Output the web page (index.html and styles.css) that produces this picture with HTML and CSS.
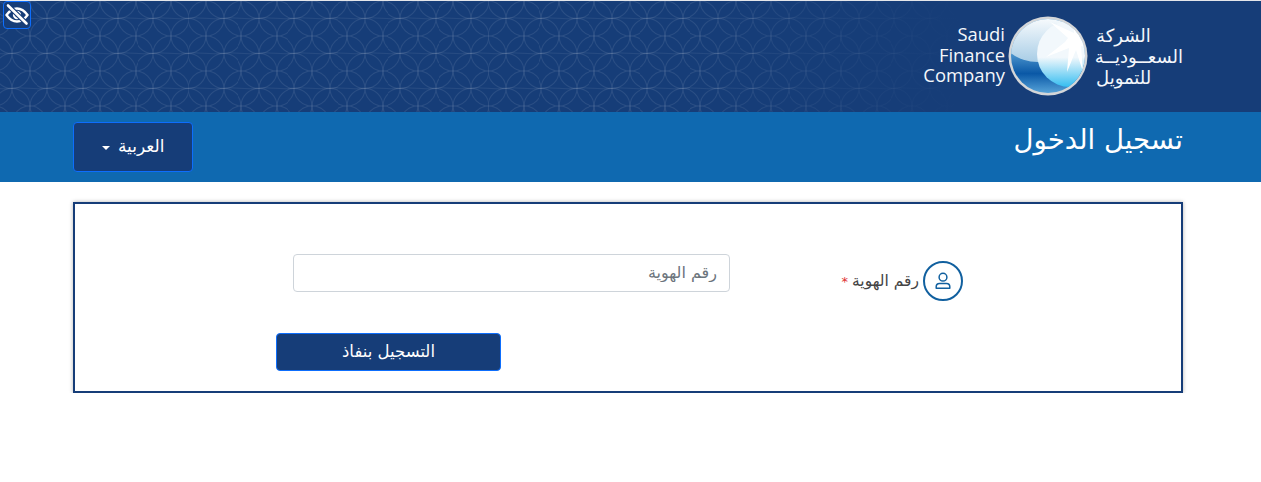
FILE: index.html
```html
<!DOCTYPE html>
<html lang="ar" dir="rtl">
<head>
  <meta charset="UTF-8">
  <title>تسجيل الدخول</title>
  <meta name="viewport" content="width=device-width, initial-scale=1.0">
  <link rel="stylesheet" href="styles.css">
</head>
<body>

  <button class="eye-btn" type="button" aria-label="hide">
    <svg viewBox="0 0 24 24" width="24" height="24" fill="none" stroke="#fff">
      <path d="M1.5 12C5 7 8.500 5.500 12 5.500s7 1.500 10.500 6.500C19 17 15.500 18.500 12 18.500S5 17 1.500 12z" stroke-width="2.300"/>
      <circle cx="12" cy="12" r="3" stroke-width="2.300"/>
      <path d="M3 2.500l18.500 18" stroke="#163d78" stroke-width="5"/>
      <path d="M3 2.500l18.500 18" stroke-width="2.600" stroke-linecap="round"/>
    </svg>
  </button>

  <div class="top-band">
    <div class="container logo-wrap">
      <div class="logo-ar">الشركة<br>السعــوديــة<br>للتمويل</div>
      <svg class="globe" viewBox="0 0 80 80" width="80" height="80">
        <defs>
          <linearGradient id="sea" x1="0" y1="0" x2="0" y2="1">
            <stop offset="0.4" stop-color="#5fa6d8"/>
            <stop offset="0.72" stop-color="#0a58a6"/>
            <stop offset="1" stop-color="#62aee0"/>
          </linearGradient>
          <linearGradient id="sky" x1="0" y1="0" x2="0" y2="1">
            <stop offset="0.2" stop-color="#ffffff"/>
            <stop offset="1" stop-color="#a8cde6"/>
          </linearGradient>
          <linearGradient id="moon" x1="0" y1="0" x2="0" y2="1">
            <stop offset="0.55" stop-color="#f2f8fc"/>
            <stop offset="1" stop-color="#35bdf0"/>
          </linearGradient>
          <clipPath id="disc"><circle cx="40" cy="40" r="37"/></clipPath>
        </defs>
        <circle cx="40" cy="40" r="39.500" fill="#d4d6d8"/>
        <g clip-path="url(#disc)">
          <rect width="80" height="80" fill="url(#sea)"/>
          <ellipse cx="30" cy="16" rx="38" ry="30" fill="url(#sky)"/>
          <circle cx="62" cy="38" r="33" fill="url(#moon)"/>
          <path d="M60 22L42 6l24 11-1-16 6 16 12-4-9 11 8 8-9-2 2 26-7-22-9 22 2-24-23 9 19-15z" fill="#fff"/>
        </g>
      </svg>
      <div class="logo-en">Saudi<br>Finance<br>Company</div>
    </div>
  </div>

  <div class="title-band">
    <div class="container title-row">
      <h1>تسجيل الدخول</h1>
      <button class="lang-btn" type="button">العربية <span class="caret"></span></button>
    </div>
  </div>

  <div class="container">
    <form class="login-card">
      <label class="id-label">
        <span class="user-icon">
          <svg viewBox="0 0 20 20" width="20" height="20" fill="none" stroke="#11609f" stroke-width="1.500">
            <circle cx="10" cy="6.200" r="3.900"/>
            <path d="M3.200 17.200v-1.400c0-2 1.400-3.300 3.300-3.300h7c1.900 0 3.300 1.300 3.300 3.300v1.400z" stroke-linejoin="round"/>
          </svg>
        </span>
        <span>رقم الهوية</span>
        <span class="req">*</span>
      </label>
      <input class="id-input" type="text" placeholder="رقم الهوية">
      <button class="submit-btn" type="button">التسجيل بنفاذ</button>
    </form>
  </div>

</body>
</html>
```

FILE: styles.css
```css
body {
  margin: 0;
  font-family: "DejaVu Sans", "Open Sans", sans-serif;
  background-color: #fff;
  color: #444;
}

.container {
  width: 1110px;
  margin-right: 78px;
}

.eye-btn {
  position: absolute;
  top: 1px;
  left: 3px;
  width: 28px;
  height: 28px;
  padding: 0;
  display: flex;
  align-items: center;
  justify-content: center;
  background-color: #163d78;
  border: 1px solid #0d6efd;
  border-radius: 4px;
}

.top-band {
  height: 111px;
  border-top: 1px solid #e4e6ea;
  background-color: #163d78;
  background-image:
    linear-gradient(to right, rgba(22,61,120,0) 0, rgba(22,61,120,0) 55%, #163d78 76%),
    url("data:image/svg+xml,%3Csvg xmlns='http://www.w3.org/2000/svg' width='35.3' height='35'%3E%3Cg fill='none' stroke='%23ffffff' stroke-opacity='0.09' stroke-width='1'%3E%3Ccircle cx='17.65' cy='17.5' r='17.6'/%3E%3Ccircle cx='0' cy='0' r='17.6'/%3E%3Ccircle cx='35.3' cy='0' r='17.6'/%3E%3Ccircle cx='0' cy='35' r='17.6'/%3E%3Ccircle cx='35.3' cy='35' r='17.6'/%3E%3Cpath d='M0 17C9 16 26 19 35.3 17' stroke-opacity='0.07'/%3E%3C/g%3E%3C/svg%3E");
  background-position: 0 0, 12px 0;
}

.logo-wrap {
  display: flex;
  align-items: center;
  height: 111px;
}

.logo-ar {
  width: 87px;
  margin-left: 8px;
  font-size: 18px;
  line-height: 21px;
  color: #f4f7fb;
  text-align: left;
}

.globe {
  flex: none;
  margin-top: -2px;
  margin-left: 3px;
}

.logo-en {
  direction: ltr;
  margin-top: -3px;
  font-family: "Open Sans", sans-serif;
  font-size: 18.400px;
  line-height: 20.500px;
  color: #f4f7fb;
  text-align: right;
}

.title-band {
  height: 70px;
  background-color: #0f69b0;
}

.title-row {
  display: flex;
  justify-content: space-between;
  align-items: flex-start;
  padding-top: 10px;
}

.title-row h1 {
  margin: 0;
  font-size: 27.500px;
  font-weight: normal;
  line-height: 34px;
  color: #fff;
}

.lang-btn {
  width: 120px;
  height: 50px;
  padding-bottom: 4px;
  background-color: #163d78;
  border: 1px solid #0d6efd;
  border-radius: 4px;
  font-family: inherit;
  font-size: 17px;
  color: #fff;
}

.caret {
  display: inline-block;
  margin-right: 3px;
  border-top: 4px solid #fff;
  border-left: 4px solid transparent;
  border-right: 4px solid transparent;
  vertical-align: 2px;
}

.login-card {
  display: grid;
  grid-template-columns: 451px 437px 1fr;
  margin-top: 20px;
  padding: 50px 0 20px;
  border: 2px solid #163d78;
  box-shadow: 0 0 4px rgba(0,0,0,0.3);
}

.id-label {
  display: flex;
  align-items: center;
  gap: 4px;
  margin-top: 7px;
  padding-right: 218px;
  font-size: 15.500px;
  color: #444;
}

.user-icon {
  flex: none;
  width: 40px;
  height: 40px;
  display: flex;
  align-items: center;
  justify-content: center;
  box-sizing: border-box;
  border: 2px solid #11609f;
  border-radius: 50%;
}

.req {
  color: #e03131;
  font-size: 13px;
}

.id-input {
  box-sizing: border-box;
  height: 38px;
  padding: 0 12px 2px;
  border: 1px solid #ced4da;
  border-radius: 4px;
  font-family: inherit;
  font-size: 16px;
}

.id-input::placeholder {
  color: #6c757d;
}

.submit-btn {
  grid-column: 2 / 4;
  justify-self: start;
  width: 225px;
  height: 38px;
  margin-top: 32px;
  margin-right: 229px;
  padding-bottom: 3px;
  background-color: #163d78;
  border: 1px solid #0d6efd;
  border-radius: 4px;
  font-family: inherit;
  font-size: 16.500px;
  color: #fff;
}
```
